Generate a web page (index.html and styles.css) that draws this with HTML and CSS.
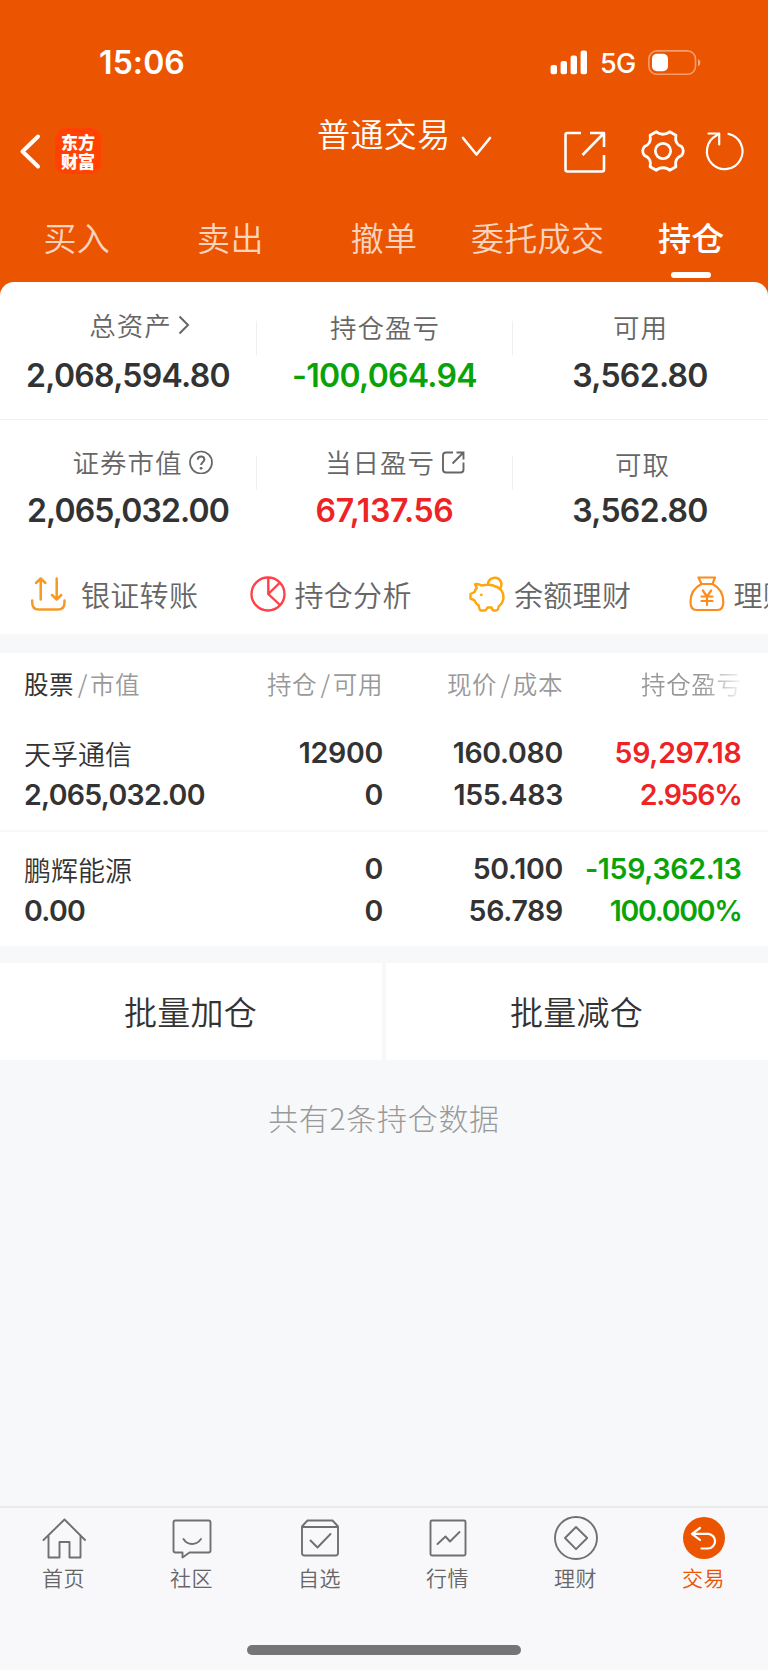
FILE: index.html
```html
<!DOCTYPE html>
<html lang="zh-CN">
<head>
<meta charset="utf-8">
<title>持仓</title>
<link rel="stylesheet" href="styles.css">
</head>
<body>
<div class="screen">
  <header class="top">
    <div class="status">
      <span class="clock">15:06</span>
      <svg class="signal" width="38" height="26" viewBox="0 0 38 26" fill="#fff"><rect x="0.6" y="15" width="6.4" height="9.3" rx="2"/><rect x="10.6" y="11" width="6.4" height="13.3" rx="2"/><rect x="20.6" y="5.6" width="6.4" height="18.7" rx="2"/><rect x="30.6" y="0.5" width="6.4" height="23.8" rx="2"/></svg>
      <span class="network">5G</span>
      <svg class="battery" width="54" height="26" viewBox="0 0 54 26"><rect x="0.9" y="0.9" width="46.6" height="23.4" rx="8" fill="none" stroke="#fff" stroke-opacity=".42" stroke-width="1.6"/><rect x="4" y="3.8" width="16" height="17.4" rx="5" fill="#fff"/><path d="M50 9 Q52.4 10.200 52.400 12.600 Q52.400 15 50 16.200Z" fill="#fff" fill-opacity=".5"/></svg>
    </div>
    <div class="navbar">
      <svg class="back" width="24" height="40" viewBox="0 0 24 40" fill="none" stroke="#fff" stroke-width="4" stroke-linecap="round" stroke-linejoin="round"><path d="M20 5.500 4.500 20.500 20 35.500"/></svg>
      <div class="logo"><span>东方</span><span>财富</span></div>
      <div class="account"><span>普通交易</span><svg width="32" height="22" viewBox="0 0 32 22" fill="none" stroke="#fff" stroke-width="2.600" stroke-linecap="round" stroke-linejoin="round"><path d="M2 2 15.500 18.500 29 2"/></svg></div>
      <svg class="share" width="44" height="44" viewBox="0 0 44 44" fill="none" stroke="#fff" stroke-width="2.600" stroke-linecap="butt" stroke-linejoin="round"><path d="M19 3H5.500Q3.500 3 3.500 5V39.500Q3.500 41.500 5.500 41.500H40Q42 41.500 42 39.500V25M28 3H42V17M42 3 20.500 25"/></svg>
      <svg class="gear" width="44" height="44" viewBox="0 0 46 46" fill="none" stroke="#fff" stroke-width="2.900" stroke-linejoin="round"><circle cx="23" cy="23" r="8"/><path d="M16 2.800Q18.500 5.500 23 5.500T30 2.800L36.500 6.500Q35.600 11.500 37.200 14.200T42.500 18.400Q44.200 20.500 44.200 23T42.500 27.600Q38.800 29 37.200 31.800T36.500 39.500L30 43.200Q27.500 40.500 23 40.500T16 43.200L9.500 39.500Q10.400 34.500 8.800 31.800T3.500 27.600Q1.800 25.500 1.800 23T3.500 18.400Q7.200 17 8.800 14.200T9.500 6.500Z"/></svg>
      <svg class="refresh" width="42" height="44" viewBox="0 0 42 44" fill="none" stroke="#fff" stroke-width="2.200" stroke-linecap="round" stroke-linejoin="round"><path d="M24.500 4.900A17.800 17.800 0 1 1 12.500 6.500L15 4.500M4.500 4.500H15.200V15.500"/></svg>
    </div>
    <nav class="tabs">
      <span>买入</span><span>卖出</span><span>撤单</span><span>委托成交</span><span class="active">持仓</span>
    </nav>
  </header>

  <section class="summary">
    <div class="stats">
      <div class="stat"><div class="label up">总资产<svg class="arrow" width="12" height="20" viewBox="0 0 12 20" fill="none" stroke="#666" stroke-width="2"><path d="M1.500 1.500 10 10 1.500 18.500"/></svg></div><div class="value">2,068,594.80</div></div>
      <div class="stat"><div class="label">持仓盈亏</div><div class="value down">-100,064.94</div></div>
      <div class="stat"><div class="label">可用</div><div class="value">3,562.80</div></div>
    </div>
    <div class="stats second">
      <div class="stat"><div class="label">证券市值<svg class="help" width="24" height="24" viewBox="0 0 24 24" fill="none" stroke="#666" stroke-width="1.700"><circle cx="12" cy="12.500" r="11"/><path d="M8.700 9.700Q9 6.500 12.100 6.500T15.400 9.600C15.400 11.900 12.100 12.100 12.100 15.100" stroke-width="2"/><circle cx="12.100" cy="18.300" r="1.400" fill="#666" stroke="none"/></svg></div><div class="value tight">2,065,032.00</div></div>
      <div class="stat"><div class="label">当日盈亏<svg class="detail" width="24" height="24" viewBox="0 0 24 24" fill="none" stroke="#666" stroke-width="1.900"><path d="M12 2.500H5Q2 2.500 2 5.500V19.500Q2 22.500 5 22.500H19.500Q22.500 22.500 22.500 19.500V12.500M15.500 2.500H22.500V9.500M22.500 2.500 11.500 13.500"/></svg></div><div class="value rise">67,137.56</div></div>
      <div class="stat"><div class="label low">可取</div><div class="value">3,562.80</div></div>
    </div>
    <div class="shortcuts">
      <div class="shortcut transfer"><svg width="36" height="36" viewBox="0 0 36 36" fill="none" stroke="#f59a23" stroke-width="2.500" stroke-linecap="round" stroke-linejoin="round"><path d="M2.200 24.500V26.500Q2.200 33.500 8.700 33.500H28Q34.500 33.500 34.500 26.500V24.500M10.700 23.500V2.500M6 7 10.700 2.500 15.400 7M26.700 2.500V23.500M22 19 26.700 23.500 31.300 19"/></svg><span>银证转账</span></div>
      <div class="shortcut"><svg width="36" height="36" viewBox="0 0 36 36" fill="none" stroke="#ff4048" stroke-width="2.400"><circle cx="18" cy="18" r="16.500"/><path d="M18.300 1.500V18L30 29M18.300 18 29.500 7"/></svg><span>持仓分析</span></div>
      <div class="shortcut"><svg width="36" height="36" viewBox="0 0 36 36" fill="none" stroke="#ffa60a" stroke-width="2.500" stroke-linejoin="round" stroke-linecap="round"><path d="M6.200 8.200Q9.500 7.500 12.500 9.500Q18 8 23.500 9.200Q34.500 12 34.500 21.500Q34.200 27 29.700 30.500Q29.300 34.500 27 34.500H25Q23.500 34.500 22.500 31.500H18.500Q17 34.500 15.500 34.500H12Q10.500 34.500 9.700 29.500Q6.500 27.500 5.500 24.300L1.500 22.500V18L5.500 16Q6.500 13 7.700 12ZM19 8.500A6.700 6.700 0 1 1 31 12.500"/><circle cx="12.300" cy="18.800" r="1.400" fill="#ffa60a" stroke="none"/></svg><span>余额理财</span></div>
      <div class="shortcut"><svg width="36" height="36" viewBox="0 0 36 36" fill="none" stroke="#fb8c1e" stroke-width="2.200" stroke-linejoin="round" stroke-linecap="round"><path d="M9.500 1.500H26L23.500 8H12.500ZM12.500 8Q1.500 13.500 1.500 26Q1.500 34 7.500 34H28.500Q34.300 34 34.300 26Q34.300 13.500 23.500 8M13.800 14.500 18 20.500 22.200 14.500M12.500 20.500H23.500M12.500 25H23.500M18 20.500V29"/></svg><span>理财</span></div>
    </div>
  </section>

  <section class="holdings">
    <div class="grid head">
      <div><b>股票</b><i>/</i>市值</div><div>持仓<i>/</i>可用</div><div>现价<i>/</i>成本</div><div class="fade">持仓盈亏</div>
    </div>
    <div class="grid item">
      <div class="name">天孚通信</div><div>12900</div><div>160.080</div><div class="rise">59,297.18</div>
      <div>2,065,032.00</div><div>0</div><div>155.483</div><div class="rise percent">2.956%</div>
    </div>
    <div class="grid item last">
      <div class="name">鹏辉能源</div><div>0</div><div>50.100</div><div class="down">-159,362.13</div>
      <div>0.00</div><div>0</div><div>56.789</div><div class="down percent">100.000%</div>
    </div>
  </section>

  <div class="actions"><div>批量加仓</div><div>批量减仓</div></div>
  <p class="total">共有2条持仓数据</p>

  <footer class="tabbar">
    <div class="tabitems">
      <div class="tab"><svg width="46" height="46" viewBox="0 0 46 46"><path d="M2.500 24 23.500 3.500 44 24M7.500 20V41.500H18.500V26H28.500V41.500H39.500V20"/></svg><span>首页</span></div>
      <div class="tab"><svg width="46" height="46" viewBox="0 0 46 46"><path d="M6.500 4.500H39.500Q41.500 4.500 41.500 6.500V34.500Q41.500 36.500 39.500 36.500H20.500L13.500 41.500V36.500H6.500Q4.500 36.500 4.500 34.500V6.500Q4.500 4.500 6.500 4.500ZM14.500 23Q17.500 28 23 28T32 23"/></svg><span>社区</span></div>
      <div class="tab"><svg width="46" height="46" viewBox="0 0 46 46"><path d="M10.500 4.500H35.500L41 10.500V37Q41 39.500 38.500 39.500H7.500Q5 39.500 5 37V10.500ZM5 11H41M13.500 24.500 20.500 31.500 33.500 18"/></svg><span>自选</span></div>
      <div class="tab"><svg width="46" height="46" viewBox="0 0 46 46"><rect x="5.500" y="4.500" width="35" height="35" rx="1.500"/><path d="M12.500 28 20.500 20.500 25 25.500 34.500 16"/></svg><span>行情</span></div>
      <div class="tab"><svg width="46" height="46" viewBox="0 0 46 46"><circle cx="23" cy="22" r="21"/><path d="M23 11 34.200 22 23 33.200 12 22Z"/></svg><span>理财</span></div>
      <div class="tab current"><svg width="46" height="46" viewBox="0 0 46 46"><circle class="disc" cx="23" cy="22" r="21"/><path class="mark" d="M19 12 11 17.800 19 24M11.500 17.800H27.500A7.400 7.400 0 0 1 27.500 32.500H20.500"/></svg><span>交易</span></div>
    </div>
    <div class="home-bar"></div>
  </footer>
</div>
</body>
</html>
```
FILE: styles.css
```css
* { box-sizing: border-box; }
body { margin: 0; background: #f7f8fa; }
.screen {
  width: 768px; height: 1670px; overflow: hidden;
  display: flex; flex-direction: column;
  background: #f7f8fa; color: #333;
  font-family: "Noto Sans CJK SC", sans-serif; font-weight: 350;
}
svg { display: block; flex: none; }
i { font-style: normal; margin: 0 2px 0 3.500px; }

.top { height: 300px; flex: none; background: #eb5502; color: #fff; }
.status { height: 74px; padding: 50px 0 0 99px; display: flex; align-items: flex-start; }
.clock { width: 451px; font: 600 32px/26px Inter, sans-serif; letter-spacing: .1px; }
.signal { margin-right: 12px; }
.network { width: 48px; font: 500 27px/27px Inter, sans-serif; letter-spacing: -.8px; }

.navbar { height: 132px; padding-left: 18px; display: flex; align-items: flex-start; }
.back { margin-top: 57px; }
.logo {
  width: 46px; height: 46px; margin: 54px 0 0 13px; padding: 4px 0 0 6px;
  display: flex; flex-direction: column;
  border-radius: 10px; background: #ff4201;
  font-size: 17px; line-height: 19px; font-weight: 900;
}
.account { width: 245px; margin: 37px 0 0 216px; display: flex; font-size: 33px; line-height: 45px; letter-spacing: .4px; }
.account svg { margin: 25px 0 0 10px; }
.share { margin-top: 56px; }
.gear { margin: 55px 0 0 35px; }
.refresh { margin: 55px 0 0 19px; }

.tabs { display: grid; grid-template-columns: repeat(5, 1fr); text-align: center; font-size: 33px; line-height: 62px; letter-spacing: .3px; color: rgba(255,255,255,.75); }
.tabs .active { color: #fff; font-weight: 500; }
.active::after { content: ""; display: block; width: 40px; height: 6px; margin: 4px auto 0; border-radius: 3px; background: #fff; }

.summary { height: 352px; flex: none; margin-top: -18px; border-radius: 14px 14px 0 0; background: #fff; overflow: hidden; }
.stats { height: 138px; padding-top: 29px; display: grid; grid-template-columns: 257px 256px 255px; border-bottom: 1.500px solid #f2f2f3; }
.stats.second { height: 114px; padding-top: 26px; border: 0; }
.stat { display: flex; flex-direction: column; align-items: center; background: linear-gradient(#efeff1, #efeff1) right 10px / 1.500px 34px no-repeat; }
.stat:last-child { background: none; }
.label { height: 32px; display: flex; align-items: center; font-size: 26.500px; line-height: 32px; letter-spacing: 1px; color: #666; }
.label.up { height: 28px; margin-bottom: 4px; padding-left: 22px; }
.label.low { padding: 4px 0 0 4px; }
.arrow { margin-left: 6px; }
.help, .detail { margin-left: 6px; }
.second .label { padding-left: 4px; }
.second .label:has(.detail) { padding-left: 20px; }
.second .label:has(.help) { padding-left: 28px; }
.value { margin-top: 13px; padding-right: 1px; font: 600 32px/40px Inter, sans-serif; letter-spacing: -.7px; }
.value.tight { letter-spacing: -.85px; }
.value.rise { letter-spacing: -.35px; }
.rise { color: #ee2325; }
.down { color: #09a309; }

.shortcuts { width: 1000px; padding: 42px 0 0 30px; display: flex; font-size: 29px; line-height: 36px; letter-spacing: .3px; color: #666; }
.shortcut { width: 219.500px; display: flex; gap: 9px; flex: none; }
.transfer { gap: 15px; }

.holdings { height: 293px; flex: none; margin-top: 19px; background: #fff; }
.grid { display: grid; grid-template-columns: 220px 139px 180px 178.500px; padding-left: 24px; text-align: right; }
.grid > :nth-child(4n+1) { text-align: left; }
.head { height: 62px; font-size: 24.500px; line-height: 62px; letter-spacing: .6px; color: #999; }
.head b { font-weight: 400; color: #333; }
.head > div { white-space: nowrap; }
.fade { -webkit-mask-image: linear-gradient(90deg, #000 78%, transparent 102%); mask-image: linear-gradient(90deg, #000 78%, transparent 102%); }
.item { height: 117px; padding-top: 17px; align-content: start; grid-auto-rows: 42px; font: 600 28.500px/42px Inter, sans-serif; letter-spacing: -.3px; border-bottom: 2px solid #f7f7f9; }
.item > :nth-child(5) { letter-spacing: -.7px; }
.item .percent { letter-spacing: -1.300px; }
.item.last { height: 114px; padding-top: 16px; border: 0; }
.item .name { font: 350 27px/43px "Noto Sans CJK SC", sans-serif; letter-spacing: 0; }

.actions { flex: none; margin-top: 16.500px; height: 97.500px; display: grid; grid-template-columns: 1fr 1fr; gap: 4px; text-align: center; font-size: 33px; line-height: 97px; letter-spacing: .3px; }
.actions div { padding-right: 1px; background: #fff; }
.total { margin: 34px 0 0; text-align: center; font-size: 30px; line-height: 46px; font-weight: 200; letter-spacing: .7px; color: #999; }

.tabbar { margin-top: auto; height: 164px; flex: none; border-top: 2px solid #ebebec; background: #f8f8fb; }
.tabitems { height: 137px; padding-top: 8px; display: grid; grid-template-columns: repeat(6, 128px); }
.tab { display: flex; flex-direction: column; align-items: center; font-size: 21px; line-height: 30px; letter-spacing: .5px; color: #666; }
.tab svg { fill: none; stroke: #707070; stroke-width: 1.900; stroke-linejoin: round; stroke-linecap: round; }
.tab span { padding-right: 1px; }
.tab.current { color: #eb5502; }
.tab .disc { fill: #eb5502; stroke: none; }
.tab .mark { stroke: #fff; stroke-width: 2.200; }
.home-bar { width: 274px; height: 10px; margin: 0 auto; border-radius: 5px; background: #757575; }
```
